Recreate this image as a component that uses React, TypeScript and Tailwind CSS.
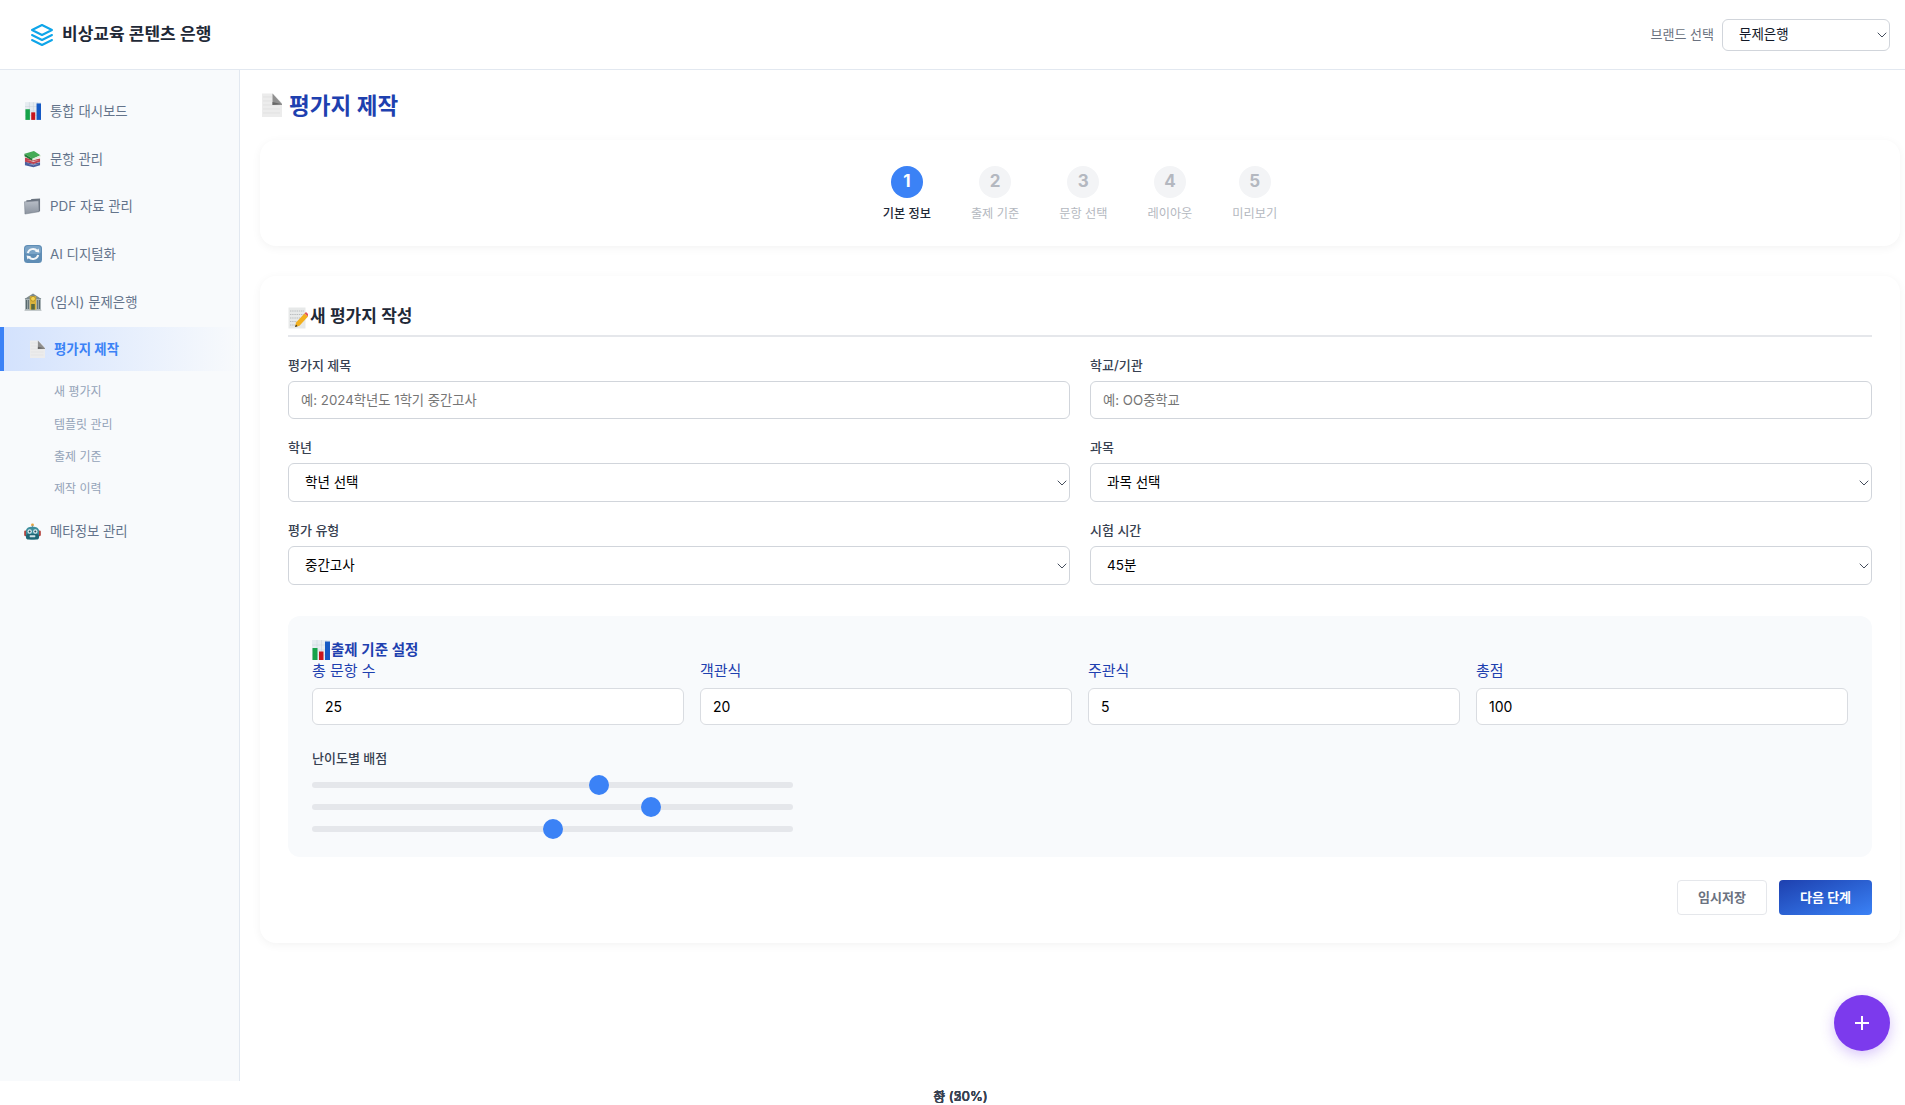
import React from "react";
import { ChevronDown } from "lucide-react";

type IconProps = { className?: string };

function ChartEmoji({ className }: IconProps) {
  return (
    <svg viewBox="0 0 18 20" className={className}>
      <rect x="0" y="0" width="18" height="20" fill="#e6ecf1" />
      <path d="M0 5H18M0 10H18M0 15H18M5 0V20M9.5 0V20M14 0V20" stroke="#c6d0d9" strokeWidth="0.5" />
      <rect x="0.5" y="8" width="5" height="12" fill="#16a34a" />
      <rect x="7" y="11.5" width="4.5" height="8.5" fill="#c8141c" />
      <rect x="13" y="1.5" width="5" height="18.5" fill="#1559c4" />
    </svg>
  );
}

function BooksEmoji({ className }: IconProps) {
  return (
    <svg viewBox="0 0 18 18" className={className}>
      <path d="M1 12 L10 14 L17 12.5 L17 15.5 L10 17.8 L1 15.5Z" fill="#4a5f9e" />
      <path d="M3 13.8 L10 15.6 L16 14 L10 15Z" fill="#eceef2" />
      <path d="M1 7.5 L10 10 L17 8.5 L17 12 L10 14.2 L1 12Z" fill="#bf4452" />
      <path d="M3 10 L10 12 L16 10.4 L10 11.2Z" fill="#f6eee8" />
      <path d="M0.5 3.5 L10.5 0.5 L17.5 5 L9 8.8Z" fill="#46ab57" />
      <path d="M0.5 3.5 L9 8.8 L9 10.8 L0.5 6Z" fill="#1f7a35" />
      <path d="M9 8.8 L17.5 5 L17.5 7 L9 10.8Z" fill="#e3e9dc" />
    </svg>
  );
}

function FolderEmoji({ className }: IconProps) {
  return (
    <svg viewBox="0 0 18 18" className={className}>
      <defs>
        <linearGradient id="fold" x1="0" y1="0" x2="0" y2="1">
          <stop offset="0" stopColor="#b8bec7" />
          <stop offset="1" stopColor="#8b939f" />
        </linearGradient>
      </defs>
      <path d="M2.5 2.5 L7 2 L8 1 L17 0.5 L17 14 L2.5 15Z" fill="#6b7480" />
      <path d="M0.5 4 L15.5 3 L16 14.5 L1 17Z" fill="url(#fold)" stroke="#6b7480" strokeWidth="0.5" />
    </svg>
  );
}

function ArrowsEmoji({ className }: IconProps) {
  return (
    <svg viewBox="0 0 18 18" className={className}>
      <rect x="0" y="0" width="18" height="18" rx="3.5" fill="#5f8db5" />
      <rect x="1" y="1" width="16" height="8" rx="3" fill="#7aa3c6" />
      <path d="M3.8 8 A5.4 5.4 0 0 1 13.2 6" fill="none" stroke="#f4f6f8" strokeWidth="2" />
      <path d="M14.2 10 A5.4 5.4 0 0 1 4.8 12" fill="none" stroke="#f4f6f8" strokeWidth="2" />
      <path d="M11 6.7 L15.4 7.6 L14.6 3.4Z" fill="#f4f6f8" />
      <path d="M7 11.3 L2.6 10.4 L3.4 14.6Z" fill="#f4f6f8" />
    </svg>
  );
}

function BankEmoji({ className }: IconProps) {
  return (
    <svg viewBox="0 0 18 18" className={className}>
      <rect x="1" y="5" width="16" height="12" fill="#a7b1b4" />
      <path d="M0.5 6 L9 0.5 L17.5 6Z" fill="#7d8a8d" />
      <path d="M2.5 7V16M4.3 7V16M13.7 7V16M15.5 7V16" stroke="#4f6164" strokeWidth="0.9" />
      <rect x="5.8" y="3.2" width="6.4" height="13.8" fill="#d9b23c" />
      <circle cx="9" cy="5.8" r="2.4" fill="#f5d34e" stroke="#8a6a14" strokeWidth="0.5" />
      <rect x="7.2" y="11" width="3.6" height="6" fill="#56683f" />
      <rect x="0.5" y="16.7" width="17" height="1.3" fill="#c3c9cb" />
    </svg>
  );
}

function PageEmoji({ className }: IconProps) {
  return (
    <svg viewBox="0 0 20 24" className={className}>
      <path d="M0 0.5 H11 L20 10 V24 H0Z" fill="#ececec" />
      <path d="M1 4H10M1 8H10M1 12H18M1 16H18M1 20H18" stroke="#dcdcdc" strokeWidth="0.6" />
      <path d="M10.5 0.5 L20 11 L20 12 L10.5 12Z" fill="#8f8f8f" />
      <path d="M10.5 9 L19 11 L10.5 12Z" fill="#666" />
    </svg>
  );
}

function MemoEmoji({ className }: IconProps) {
  return (
    <svg viewBox="0 0 20 22" className={className}>
      <rect x="0.5" y="0.5" width="17" height="21" fill="#e7e9e9" />
      <path d="M2 4H16M2 7.5H16M2 11H12M2 14.5H9M2 18H7" stroke="#b4b8ba" strokeWidth="0.9" strokeDasharray="1.4 0.8" />
      <path d="M7 20 L8 15.5 L16.5 6.5 L20 9.5 L11.5 18.8Z" fill="#f2b01e" />
      <path d="M16.5 6.5 L18 5 L20 7 L20 9.5Z" fill="#e2545a" />
      <path d="M7 20 L8 17.6 L9.5 19.2Z" fill="#2e2e2e" />
    </svg>
  );
}

function RobotEmoji({ className }: IconProps) {
  return (
    <svg viewBox="0 0 18 18" className={className}>
      <circle cx="9" cy="2" r="1.5" fill="#e9a23b" />
      <rect x="8.4" y="2.5" width="1.2" height="2.5" fill="#8b98a0" />
      <rect x="0.2" y="8" width="2.6" height="6" rx="1.2" fill="#b33f38" />
      <rect x="15.2" y="8" width="2.6" height="6" rx="1.2" fill="#b33f38" />
      <path d="M2 9 C2 5.5 5 4 9 4 C13 4 16 5.5 16 9 V13 C16 16.5 13 17.5 9 17.5 C5 17.5 2 16.5 2 13Z" fill="#3c8d9c" />
      <rect x="2" y="11.5" width="14" height="6" rx="3" fill="#1f6675" />
      <circle cx="6" cy="9" r="2.3" fill="#dfeef2" />
      <circle cx="12" cy="9" r="2.3" fill="#dfeef2" />
      <circle cx="6" cy="9" r="1.1" fill="#27515c" />
      <circle cx="12" cy="9" r="1.1" fill="#27515c" />
      <rect x="6" y="13" width="6" height="2" rx="0.6" fill="#cfe3e8" />
    </svg>
  );
}

const navTop = [
  { icon: ChartEmoji, label: "통합 대시보드", cls: "w-[16px] h-[18px] ml-[1px]" },
  { icon: BooksEmoji, label: "문항 관리", cls: "w-[17px] h-[18px]" },
  { icon: FolderEmoji, label: "PDF 자료 관리", cls: "w-[17px] h-[17px]" },
  { icon: ArrowsEmoji, label: "AI 디지털화", cls: "w-[18px] h-[18px]" },
  { icon: BankEmoji, label: "(임시) 문제은행", cls: "w-[18px] h-[18px]" },
];

const subItems = ["새 평가지", "템플릿 관리", "출제 기준", "제작 이력"];
const steps = ["기본 정보", "출제 기준", "문항 선택", "레이아웃", "미리보기"];

function NavRow({ icon: Icon, label, cls }: { icon: (p: IconProps) => React.ReactElement; label: string; cls: string }) {
  return (
    <a className="h-[43.6px] pl-[24px] flex items-center text-[13.4px] text-[#64748b]">
      <span className="w-[26px] flex items-center shrink-0">
        <Icon className={cls} />
      </span>
      {label}
    </a>
  );
}

function Field({ label, children }: { label: string; children: React.ReactNode }) {
  return (
    <div className="flex flex-col">
      <label className="h-[20px] mb-[6px] text-[13px] leading-[20px] font-medium text-[#374151]">{label}</label>
      {children}
    </div>
  );
}

function TextInput({ placeholder }: { placeholder: string }) {
  return (
    <input
      placeholder={placeholder}
      className="h-[38px] w-full px-[12px] rounded-md border border-[#d1d5db] bg-white text-[13.3px] outline-none placeholder:text-[#757575]"
    />
  );
}

function Select({ value, small }: { value: string; small?: boolean }) {
  return (
    <div className="relative">
      <select
        defaultValue={value}
        className={
          small
            ? "appearance-none w-[168px] h-[32px] pl-[16px] rounded-md border border-[#d1d5db] bg-white text-[13.5px] text-[#111827] outline-none"
            : "appearance-none w-full h-[39px] pl-[16px] rounded-md border border-[#d1d5db] bg-white text-[13.5px] text-black outline-none"
        }
      >
        <option>{value}</option>
      </select>
      <ChevronDown size={16} strokeWidth={1.4} className="absolute right-0 top-1/2 -translate-y-1/2 text-[#374151] pointer-events-none" />
    </div>
  );
}

function NumberField({ label, value }: { label: string; value: string }) {
  return (
    <div className="flex flex-col">
      <label className="h-[22px] mb-[6px] text-[15px] leading-[22px] text-[#1e40af]">{label}</label>
      <input
        defaultValue={value}
        className="h-[37px] w-full px-[12px] rounded-md border border-[#d9dce1] bg-white text-[14px] text-black outline-none"
      />
    </div>
  );
}

function Slider({ value }: { value: number }) {
  return (
    <input
      type="range"
      min={0}
      max={100}
      step={0.1}
      defaultValue={value}
      className="block appearance-none w-[481px] h-[6px] mb-[16px] rounded-full bg-[#e5e7eb] outline-none [&::-webkit-slider-thumb]:appearance-none [&::-webkit-slider-thumb]:w-[20px] [&::-webkit-slider-thumb]:h-[20px] [&::-webkit-slider-thumb]:rounded-full [&::-webkit-slider-thumb]:bg-[#3b82f6]"
    />
  );
}

export default function App() {
  return (
    <div className="font-['Inter','Noto_Sans_CJK_KR',sans-serif] bg-white relative">
      <header className="h-[70px] flex items-center justify-between border-b border-[#e2e8f0] pl-[30px] pr-[15px]">
        <div className="flex items-center gap-[8px]">
          <svg viewBox="0 0 24 24" className="w-[24px] h-[24px]" fill="none" stroke="#0ea5e9" strokeWidth="2" strokeLinejoin="round" strokeLinecap="round">
            <path d="M12 2 L2 7 L12 12 L22 7Z" />
            <path d="M2 12 L12 17 L22 12" />
            <path d="M2 17 L12 22 L22 17" />
          </svg>
          <span className="text-[17px] font-semibold text-[#1f2937]">비상교육 콘텐츠 은행</span>
        </div>
        <div className="flex items-center gap-[8px]">
          <span className="text-[13px] text-[#6b7280]">브랜드 선택</span>
          <Select value="문제은행" small />
        </div>
      </header>

      <div className="flex h-[1011px]">
        <aside className="w-[240px] shrink-0 bg-[#f8fafc] border-r border-[#e2e8f0] pt-[19.5px] flex flex-col gap-[4px]">
          {navTop.map((n) => (
            <NavRow key={n.label} {...n} />
          ))}
          <a className="h-[43.6px] pl-[26px] flex items-center border-l-[4px] border-[#3b82f6] bg-gradient-to-r from-[#d3e2fd] to-[#f8fafc] text-[13.4px] font-semibold text-[#3b82f6]">
            <span className="w-[24px] flex items-center shrink-0">
              <PageEmoji className="w-[15px] h-[18px]" />
            </span>
            평가지 제작
          </a>
          <div className="pt-[1px] flex flex-col">
            {subItems.map((s) => (
              <a key={s} className="h-[32.3px] pl-[54px] flex items-center text-[12px] text-[#94a3b8]">
                {s}
              </a>
            ))}
          </div>
          <NavRow icon={RobotEmoji} label="메타정보 관리" cls="w-[17px] h-[17px]" />
        </aside>

        <main className="flex-1 pl-[20px] pr-[5px]">
          <div className="h-[70px] flex items-center pl-[2px] gap-[7px]">
            <PageEmoji className="w-[20px] h-[24px]" />
            <h1 className="text-[22.5px] font-semibold text-[#1e40af] translate-y-[0.5px]">평가지 제작</h1>
          </div>

          <section className="h-[106px] rounded-2xl bg-white shadow-[0_2px_10px_rgba(0,0,0,0.05)] pt-[26px] flex justify-center gap-[40px]">
            {steps.map((s, i) => (
              <div key={s} className="flex flex-col items-center gap-[7px]">
                <div
                  className={
                    i === 0
                      ? "w-[32px] h-[32px] rounded-full flex items-center justify-center text-[17px] font-bold bg-[#3b82f6] text-white"
                      : "w-[32px] h-[32px] rounded-full flex items-center justify-center text-[17px] font-bold bg-[#f3f4f6] text-[#b4b8c0]"
                  }
                >
                  {i + 1}
                </div>
                <span className={i === 0 ? "text-[12.2px] font-medium text-[#1f2937]" : "text-[12.2px] text-[#b4b8c0]"}>{s}</span>
              </div>
            ))}
          </section>

          <section className="mt-[30px] h-[667px] rounded-2xl bg-white shadow-[0_2px_10px_rgba(0,0,0,0.05)] pt-[26px] px-[28px]">
            <div className="h-[35px] flex items-center border-b-2 border-[#e5e7eb] pb-[4px]">
              <MemoEmoji className="w-[20px] h-[22px] mt-[2px] mr-[2px]" />
              <h2 className="text-[17px] font-semibold text-[#1f2937]">새 평가지 작성</h2>
            </div>

            <div className="mt-[18px] grid grid-cols-2 gap-x-[20px] gap-y-[18px]">
              <Field label="평가지 제목">
                <TextInput placeholder="예: 2024학년도 1학기 중간고사" />
              </Field>
              <Field label="학교/기관">
                <TextInput placeholder="예: OO중학교" />
              </Field>
              <Field label="학년">
                <Select value="학년 선택" />
              </Field>
              <Field label="과목">
                <Select value="과목 선택" />
              </Field>
              <Field label="평가 유형">
                <Select value="중간고사" />
              </Field>
              <Field label="시험 시간">
                <Select value="45분" />
              </Field>
            </div>

            <div className="mt-[31px] h-[241px] rounded-xl bg-[#f8fafc] px-[24px] pt-[23px]">
              <div className="h-[21px] flex items-center gap-[1px]">
                <ChartEmoji className="w-[18px] h-[20px]" />
                <h3 className="text-[14.5px] font-semibold text-[#1e40af]">출제 기준 설정</h3>
              </div>
              <div className="grid grid-cols-4 gap-x-[16px]">
                <NumberField label="총 문항 수" value="25" />
                <NumberField label="객관식" value="20" />
                <NumberField label="주관식" value="5" />
                <NumberField label="총점" value="100" />
              </div>
              <div className="mt-[23px] h-[20px] mb-[14px] text-[13px] leading-[20px] font-medium text-[#374151]">난이도별 배점</div>
              <Slider value={60} />
              <Slider value={71.4} />
              <Slider value={50} />
            </div>

            <div className="mt-[23px] flex justify-end gap-[12px]">
              <button className="w-[90px] h-[35px] rounded-[4px] border border-[#e5e7eb] bg-white text-[13px] font-semibold text-[#6b7280]">임시저장</button>
              <button className="w-[93px] h-[35px] rounded-[4px] bg-gradient-to-br from-[#1e40af] to-[#3b82f6] text-[13px] font-semibold text-white">다음 단계</button>
            </div>
          </section>
        </main>
      </div>

      <div className="h-[24px] pl-[16px] pt-[7px] flex justify-center items-center">
        <div className="grid text-[13px] font-medium text-[#374151]">
          <span className="[grid-area:1/1] text-center">상 (20%)</span>
          <span className="[grid-area:1/1] text-center">중 (50%)</span>
          <span className="[grid-area:1/1] text-center">하 (30%)</span>
        </div>
      </div>

      <button className="fixed right-[15px] bottom-[54px] w-[56px] h-[56px] rounded-full bg-[#7c3aed] text-white flex items-center justify-center shadow-[0_4px_14px_rgba(124,58,237,0.3)]">
        <svg viewBox="0 0 14 14" className="w-[14px] h-[14px]" stroke="white" strokeWidth="2">
          <path d="M7 0V14M0 7H14" />
        </svg>
      </button>
    </div>
  );
}
